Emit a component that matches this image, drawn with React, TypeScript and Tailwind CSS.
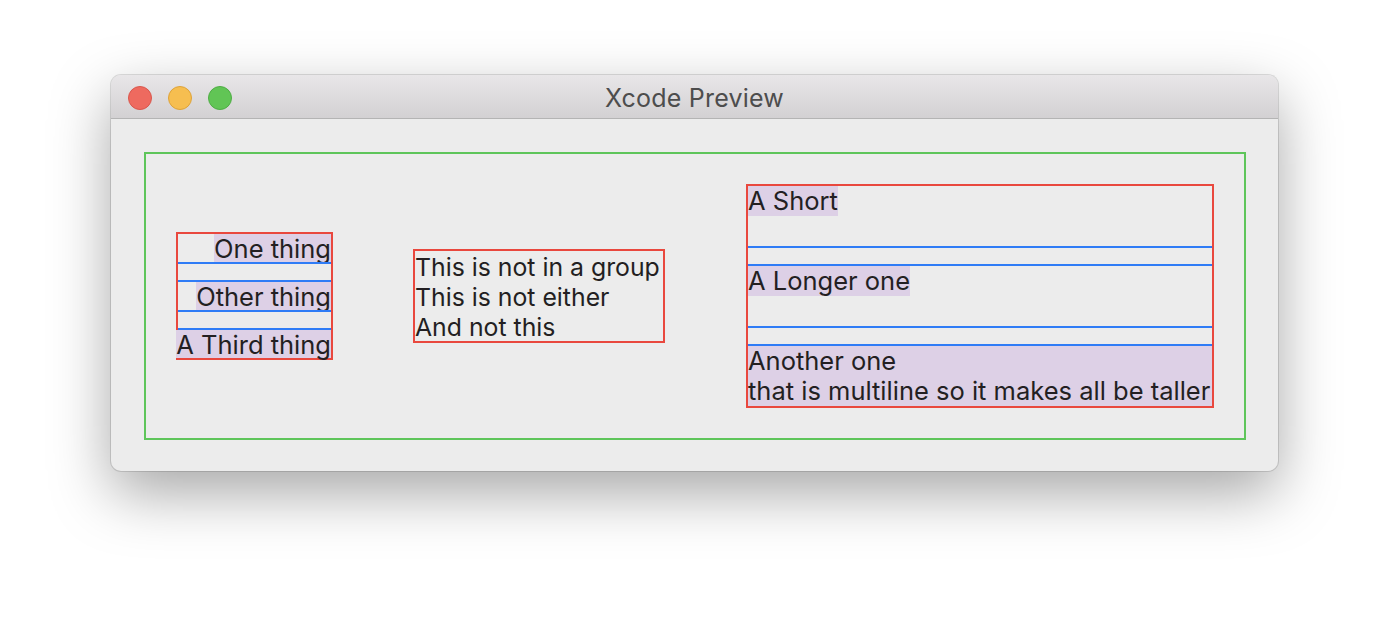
import React from 'react';

const font = { fontFamily: 'Inter, "Noto Sans", sans-serif' };

function BlueLine() {
  return <div className="h-[2px] w-full bg-[#2f7cf6]" />;
}

function Spacer() {
  return (
    <>
      <BlueLine />
      <div className="h-[16px]" />
      <BlueLine />
    </>
  );
}

export default function App() {
  const leftRows = ['One thing', 'Other thing', 'A Third thing'];
  const rightRows = [['A Short'], ['A Longer one'], ['Another one', 'that is multiline so it makes all be taller']];

  return (
    <div className="w-[1390px] h-[620px] bg-white pt-[75px] pl-[111px]" style={font}>
      <div className="w-[1167px] h-[396px] rounded-[10px] overflow-hidden bg-[#ececec] shadow-[0_22px_60px_rgba(0,0,0,0.35),0_0_0_1px_rgba(0,0,0,0.12)]">
        {/* Title bar */}
        <div className="relative h-[44px] border-b border-[#b4b4b4] bg-gradient-to-b from-[#e8e6e8] to-[#d3d1d3] flex items-center justify-center">
          <div className="absolute left-[17px] top-[11px] flex gap-[16px]">
            <span className="block w-[24px] h-[24px] rounded-full bg-[#ee6a5f] border border-[#d9574d]" />
            <span className="block w-[24px] h-[24px] rounded-full bg-[#f6be50] border border-[#dea33a]" />
            <span className="block w-[24px] h-[24px] rounded-full bg-[#61c555] border border-[#4fad45]" />
          </div>
          <span className="pt-[4px] text-[25px] text-[#4d4d4d] tracking-[0.2px]">Xcode Preview</span>
        </div>

        {/* Content */}
        <div className="pt-[33px] pl-[33px]">
          <div className="w-[1102px] h-[288px] border-2 border-[#5ec55a] flex items-center justify-between pl-[30px] pr-[30px] text-[#231f22] text-[25.5px]">
            {/* Left group */}
            <div className="w-[157px] border-2 border-[#e9483e] flex flex-col">
              {leftRows.map((t, i) => (
                <React.Fragment key={t}>
                  {i > 0 && <Spacer />}
                  <div className="h-[28px] flex justify-end">
                    <span className="bg-[#ddd0e6] h-[28px] leading-[29px] whitespace-nowrap">{t}</span>
                  </div>
                </React.Fragment>
              ))}
            </div>

            {/* Middle */}
            <div className="w-[252px] -ml-[1px] border-2 border-[#e9483e] leading-[30px] whitespace-nowrap pt-[1px] h-[94px] text-[24.8px]">
              <div>This is not in a group</div>
              <div>This is not either</div>
              <div>And not this</div>
            </div>

            {/* Right group */}
            <div className="w-[468px] border-2 border-[#e9483e] flex flex-col">
              {rightRows.map((lines, i) => (
                <React.Fragment key={i}>
                  {i > 0 && <Spacer />}
                  <div className="h-[60px] flex items-start">
                    <span className={`bg-[#ddd0e6] leading-[30px] whitespace-nowrap ${lines.length > 1 ? 'w-full h-full' : ''}`}>
                      {lines.map((l) => (
                        <div key={l}>{l}</div>
                      ))}
                    </span>
                  </div>
                </React.Fragment>
              ))}
            </div>
          </div>
        </div>
      </div>
    </div>
  );
}
